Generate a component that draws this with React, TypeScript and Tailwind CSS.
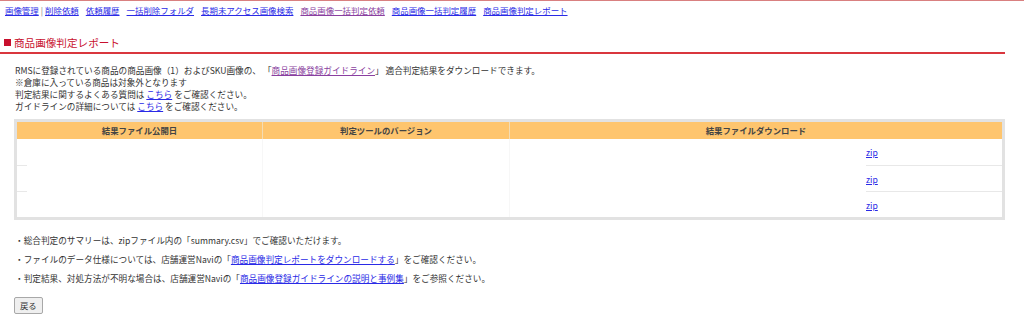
const font = { fontFamily: '"Noto Sans CJK JP", "Noto Sans", sans-serif' }

const navLinks = [
  { label: '依頼履歴' },
  { label: '一括削除フォルダ' },
  { label: '長期未アクセス画像検索' },
  { label: '商品画像一括判定依頼', visited: true },
  { label: '商品画像一括判定履歴' },
  { label: '商品画像判定レポート' }
]

function Link({ children, visited }: { children: React.ReactNode; visited?: boolean }) {
  return (
    <a href="#" className={`underline ${visited ? 'text-[#8a3fa0]' : 'text-[#2a2ae6]'}`}>
      {children}
    </a>
  )
}

export default function App() {
  const rows = [0, 1, 2]
  return (
    <div className="w-[1024px] h-[320px] bg-white text-[#333] text-[8.65px] leading-[12px] overflow-hidden border-t border-[#d98080]" style={font}>
      <div className="flex items-center h-[17px] pl-[5px] gap-[7px] text-[8.45px]">
        <span className="flex items-center gap-[2px]">
          <Link>画像管理</Link>
          <span className="text-[#888]">|</span>
          <Link>削除依頼</Link>
        </span>
        {navLinks.map(l => (
          <Link key={l.label} visited={l.visited}>{l.label}</Link>
        ))}
      </div>

      <div className="mt-[18px] w-[1005px] border-b-2 border-[#d9363e] pb-[3px] flex items-center">
        <span className="ml-[4px] w-[7px] h-[7px] bg-[#c8102e]" />
        <span className="ml-[3px] text-[10.6px] leading-[13px] text-[#c8102e]">商品画像判定レポート</span>
      </div>

      <div className="mt-[10px] pl-[15px]">
        <p>
          RMSに登録されている商品の商品画像（1）およびSKU画像の、 「<Link visited>商品画像登録ガイドライン</Link>」 適合判定結果をダウンロードできます。
        </p>
        <p>※倉庫に入っている商品は対象外となります</p>
        <p>判定結果に関するよくある質問は <Link>こちら</Link> をご確認ください。</p>
        <p>ガイドラインの詳細については <Link>こちら</Link> をご確認ください。</p>
      </div>

      <div className="ml-[14px] mt-[7px] w-[991px] border-[3px] border-[#e2e2e2]">
        <div className="grid grid-cols-[246px_247px_1fr] h-[17px] bg-[#fec56e] font-bold text-[#444] leading-[17px] text-center text-[8.4px]">
          <div className="border-r border-[#f3dcb4]">結果ファイル公開日</div>
          <div className="border-r border-[#f3dcb4]">判定ツールのバージョン</div>
          <div>結果ファイルダウンロード</div>
        </div>
        {rows.map(i => (
          <div key={i} className="grid grid-cols-[246px_247px_1fr] h-[26px]">
            <div className="border-r border-[#f7f7f7]">
              {i > 0 && <div className="w-[10px] border-t border-[#e8e8e8]" />}
            </div>
            <div className="border-r border-[#f7f7f7]" />
            <div className="flex justify-end">
              <div className={`w-[136px] flex items-center ${i > 0 ? 'border-t border-[#e8e8e8]' : ''}`}>
                <Link>zip</Link>
              </div>
            </div>
          </div>
        ))}
      </div>

      <div className="mt-[14px] pl-[15px] flex flex-col gap-[7px]">
        <p>・総合判定のサマリーは、zipファイル内の「summary.csv」でご確認いただけます。</p>
        <p>・ファイルのデータ仕様については、店舗運営Naviの「<Link>商品画像判定レポートをダウンロードする</Link>」をご確認ください。</p>
        <p>・判定結果、対処方法が不明な場合は、店舗運営Naviの「<Link>商品画像登録ガイドラインの説明と事例集</Link>」をご参照ください。</p>
      </div>

      <button className="ml-[14px] mt-[13px] h-[17px] px-[5px] text-[8.4px] leading-[15px] text-[#333] bg-[#efefef] border border-[#a8a8a8] rounded-[2px]" style={font}>
        戻る
      </button>
    </div>
  )
}
